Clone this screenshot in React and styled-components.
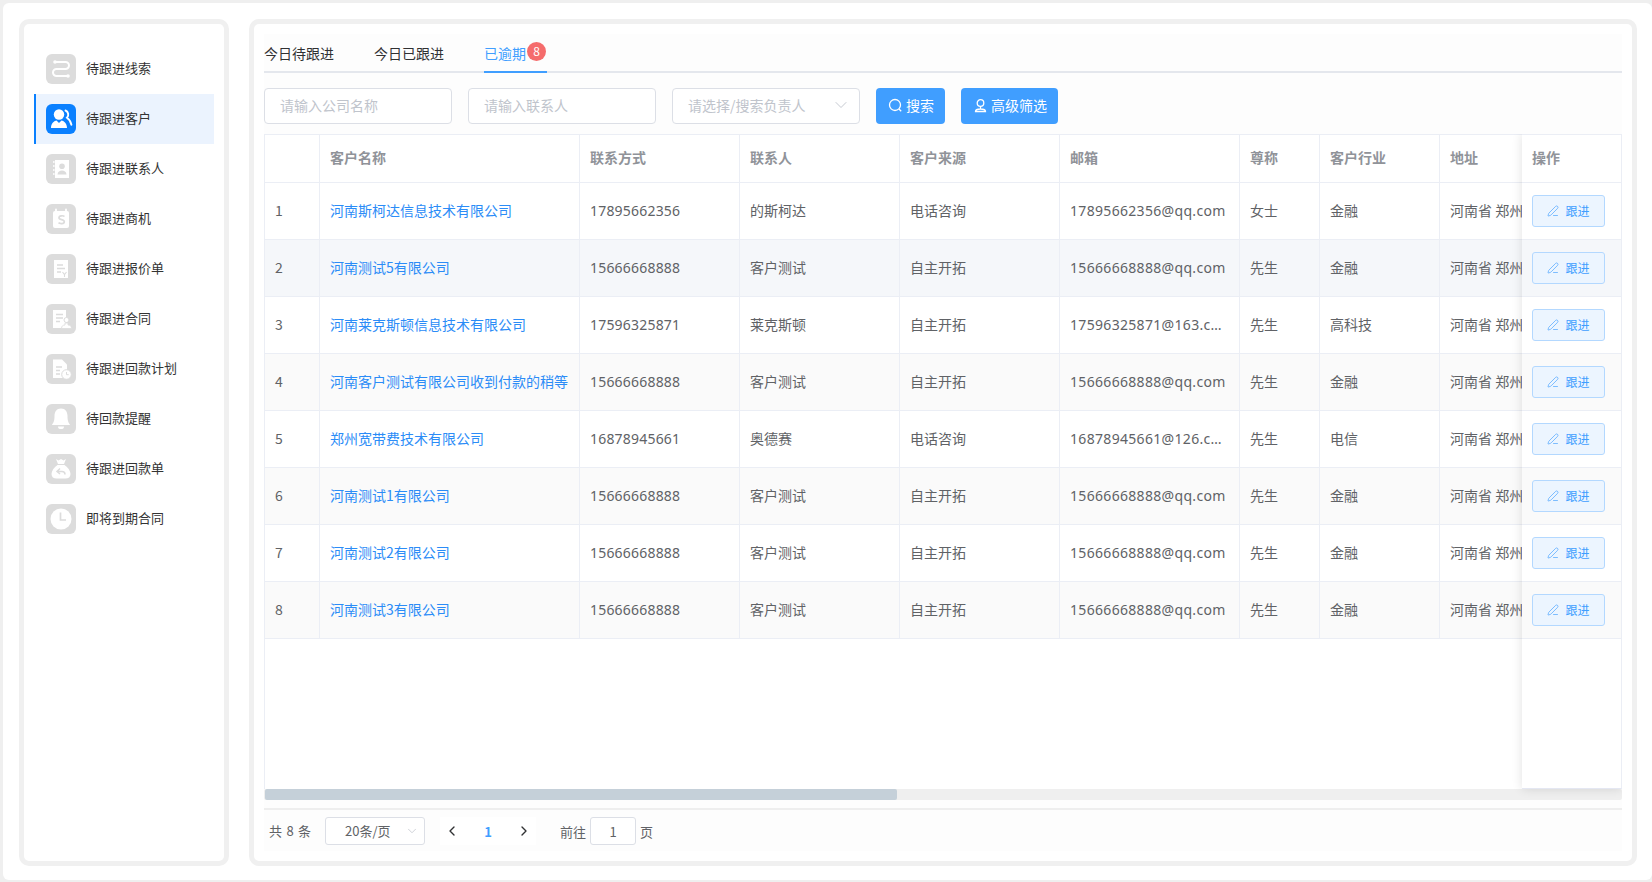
import React from "react";
import styled, { createGlobalStyle } from "styled-components";
import { ChevronDown, ChevronLeft, ChevronRight, PenLine } from "lucide-react";

const GlobalStyle = createGlobalStyle`
  html, body {
    margin: 0;
    padding: 0;
    height: 100%;
    background: #efefef;
  }
  body {
    font-family: "Noto Sans CJK SC", "Noto Sans", sans-serif;
    font-size: 14px;
    color: #606266;
  }
  * { box-sizing: border-box; }
`;

const Page = styled.div`
  width: 1652px;
  height: 882px;
  padding: 3px 0 0 3px;
  overflow: hidden;
`;

const Main = styled.div`
  height: 877px;
  background: #fff;
  border-radius: 6px;
  padding: 16px 15px 0 16px;
  display: flex;
  gap: 20px;
  align-items: flex-start;
`;

const Card = styled.div`
  height: 847px;
  border: 5px solid #f0f0f0;
  border-radius: 10px;
  background: #fff;
  min-width: 0;
`;

const SideCard = styled(Card)`
  flex: 0 0 210px;
  padding: 20px 10px;
`;

const ContentCard = styled(Card)`
  flex: 0 0 1388px;
  padding: 10px;
`;

const Inner = styled.div`
  height: 100%;
  background: #fdfdfd;
  display: flex;
  flex-direction: column;
`;

const MenuItem = styled.div`
  height: 50px;
  display: flex;
  align-items: center;
  gap: 10px;
  padding-left: 10px;
  border-left: 2px solid ${(p) => (p.$active ? "#0a80ff" : "transparent")};
  background: ${(p) => (p.$active ? "#ebf3fe" : "transparent")};
  font-size: 13px;
  color: #333;
`;

const MenuLabel = styled.span`
  padding-bottom: 3px;
`;

const MenuIcon = styled.span`
  width: 30px;
  height: 30px;
  border-radius: 6px;
  background: ${(p) => (p.$active ? "#0a80ff" : "#dcdcdc")};
  display: flex;
  align-items: center;
  justify-content: center;
  svg { display: block; }
`;

const Tabs = styled.div`
  height: 39px;
  display: flex;
  border-bottom: 2px solid #e4e7ed;
`;

const Tab = styled.div`
  position: relative;
  padding: 0 20px;
  height: 39px;
  line-height: 39px;
  color: ${(p) => (p.$active ? "#409eff" : "#303133")};
  border-bottom: 2px solid ${(p) => (p.$active ? "#409eff" : "transparent")};
  &:first-child { padding-left: 0; }
  ${(p) => p.$active && "padding: 0 21px 0 0; margin-left: 20px;"}
`;

const Badge = styled.span`
  position: absolute;
  top: 8px;
  right: 1px;
  width: 19px;
  height: 19px;
  border-radius: 50%;
  background: #f56c6c;
  color: #fff;
  font-size: 12px;
  line-height: 18px;
  text-align: center;
`;

const Filters = styled.div`
  display: flex;
  gap: 16px;
  padding-top: 15px;
  height: 61px;
`;

const Field = styled.div`
  width: 188px;
  height: 36px;
  border: 1px solid #dcdfe6;
  border-radius: 4px;
  background: #fff;
  padding: 0 8px 2px 15px;
  display: flex;
  align-items: center;
  justify-content: space-between;
  color: #c0c4cc;
  font-size: 14px;
`;

const PrimaryButton = styled.div`
  height: 36px;
  padding: 0 11px 2px 12px;
  background: #409eff;
  border-radius: 4px;
  color: #fff;
  display: flex;
  align-items: center;
  gap: 3px;
  font-size: 14px;
`;

const TableBox = styled.div`
  position: relative;
  height: 666px;
  overflow: hidden;
  flex: none;
`;

const TableScroll = styled.div`
  height: 655px;
  overflow: hidden;
  border-left: 1px solid #ebeef5;
  border-top: 1px solid #ebeef5;
  background: #fff;
`;

const Table = styled.table`
  table-layout: fixed;
  border-collapse: separate;
  border-spacing: 0;
  width: 1258px;
`;

const HeadCell = styled.th`
  height: 48px;
  padding: 0 10px 3px;
  text-align: left;
  font-weight: 700;
  font-size: 14px;
  color: #909399;
  background: #fff;
  border-right: 1px solid #ebeef5;
  border-bottom: 1px solid #ebeef5;
  &:last-child { border-right: none; }
`;

const Row = styled.tr`
  background: ${(p) => (p.$hover ? "#f5f7fa" : p.$striped ? "#fafafa" : "#fff")};
`;

const Cell = styled.td`
  height: 57px;
  padding: 0 ${(p) => (p.$clip ? "0" : "10px")} 2px 10px;
  font-size: 14px;
  color: #606266;
  white-space: nowrap;
  overflow: hidden;
  text-overflow: ${(p) => (p.$clip ? "clip" : "ellipsis")};
  font-family: ${(p) => (p.$spacing ? '"Noto Sans", sans-serif' : "inherit")};
  letter-spacing: ${(p) => p.$spacing || "normal"};
  border-right: 1px solid #ebeef5;
  border-bottom: 1px solid #ebeef5;
  &:last-child { border-right: none; }
`;

const CompanyLink = styled.span`
  color: #2b8cf7;
`;

const FixedColumn = styled.div`
  position: absolute;
  top: 0;
  right: 0;
  width: 100px;
  height: 655px;
  background: #fff;
  border-top: 1px solid #ebeef5;
  border-right: 1px solid #ebeef5;
  border-bottom: 1px solid #e4e7f2;
  box-shadow: 0 0 10px rgba(0, 0, 0, 0.12);
`;

const FixedHead = styled.div`
  height: 48px;
  padding: 0 0 3px 10px;
  display: flex;
  align-items: center;
  font-weight: 700;
  color: #909399;
  border-bottom: 1px solid #ebeef5;
`;

const FixedRow = styled.div`
  height: 57px;
  padding-left: 10px;
  display: flex;
  align-items: center;
  background: ${(p) => (p.$hover ? "#f5f7fa" : p.$striped ? "#fafafa" : "#fff")};
  border-bottom: 1px solid #ebeef5;
`;

const FollowButton = styled.div`
  width: 73px;
  height: 32px;
  padding-bottom: 1px;
  background: #ecf5ff;
  border: 1px solid #b3d8ff;
  border-radius: 3px;
  color: #409eff;
  font-size: 12px;
  display: flex;
  align-items: center;
  justify-content: center;
  gap: 6px;
`;

const Scrollbar = styled.div`
  height: 11px;
  background: #efefef;
  padding-left: 1px;
  border-radius: 2px;
`;

const Thumb = styled.div`
  width: 632px;
  height: 11px;
  background: #c5d0d9;
  border-radius: 2px;
`;

const Pager = styled.div`
  flex: 1;
  margin-top: 8px;
  border-top: 2px solid #eeeeee;
  display: flex;
  align-items: center;
  padding: 1px 0 0 5px;
  font-size: 13px;
  color: #606266;
`;

const PagerTotal = styled.span`
  width: 56px;
  word-spacing: 1.5px;
  padding-bottom: 1px;
`;

const SizeSelect = styled.div`
  width: 100px;
  height: 28px;
  border: 1px solid #dcdfe6;
  border-radius: 3px;
  background: #fff;
  display: flex;
  align-items: center;
  justify-content: space-between;
  padding: 0 5px 1px 19px;
`;

const PagerNav = styled.div`
  width: 96px;
  height: 28px;
  margin: 0 24px 0 15px;
  background: #fff;
  display: flex;
  align-items: center;
  justify-content: space-between;
  padding: 0 4px;
  color: #303133;
`;

const PageNumber = styled.span`
  color: #409eff;
  font-weight: 700;
`;

const JumpInput = styled.div`
  width: 46px;
  height: 28px;
  margin: 0 4px;
  border: 1px solid #dcdfe6;
  border-radius: 3px;
  background: #fff;
  display: flex;
  align-items: center;
  justify-content: center;
`;

const g = "#fff";
const c = "#dcdcdc";

const icons = [
  // 线索
  <>
    <circle cx="9" cy="8" r="1.8" fill={g} />
    <circle cx="22" cy="22" r="1.8" fill={g} />
    <path d="M9 8H19.500a3.500 3.500 0 0 1 0 7h-9a3.500 3.500 0 0 0 0 7H22" fill="none" stroke={g} strokeWidth="2" />
  </>,
  // 客户
  <>
    <circle cx="13" cy="10.500" r="5.200" fill={g} />
    <path d="M5 24c0-5 3.500-7.300 5.500-7.600l2.500 2.600 2.500-2.600c2 .3 5.500 2.600 5.500 7.600z" fill={g} />
    <path d="M19.500 6.500c3 1.200 3.600 5 1.500 7.200 2.400 1.600 3.800 4 4.400 7" fill="none" stroke={g} strokeWidth="1.900" strokeLinecap="round" />
  </>,
  // 联系人
  <>
    <path d="M9 6h14v18H9z" fill={g} />
    <path d="M7 8h3M7 12h3M7 16h3M7 20h3" stroke={g} strokeWidth="1.600" strokeDasharray="1.600 0.800" />
    <circle cx="16" cy="12.300" r="2.800" fill={c} />
    <path d="M11.500 20.500c.3-3 2.300-4 4.500-4s4.200 1 4.500 4z" fill={c} />
  </>,
  // 商机
  <>
    <rect x="7" y="7" width="16" height="17" rx="2" fill={g} />
    <path d="M10 5.500v3M20 5.500v3" stroke={g} strokeWidth="1.800" strokeLinecap="round" />
    <path d="M18.500 12.500c-1-1-5.500-1.300-5.500 1.200 0 2.600 5.300 1.300 5.300 4 0 2.400-4.600 2.200-5.800 1" fill="none" stroke={c} strokeWidth="1.700" />
  </>,
  // 报价单
  <>
    <path d="M8 6h14v18H8z" fill={g} />
    <path d="M11 11h6M11 14.500h8M11 18h4" stroke={c} strokeWidth="1.300" />
    <path d="M16.500 18l2 2.500 2-2.500M18.500 20.500V23" fill="none" stroke={c} strokeWidth="1.100" />
  </>,
  // 合同
  <>
    <path d="M7 6h13v18H7z" fill={g} />
    <path d="M10 10.500h7M10 14h7M10 17.500h4" stroke={c} strokeWidth="1.300" />
    <circle cx="20.500" cy="16" r="2.500" fill={g} stroke={c} strokeWidth="1" />
    <path d="M15.500 24.500c0-2.500 1.500-3.500 3.500-3.500v-2h3v2c2 0 3.500 1 3.500 3.500z" fill={g} stroke={c} strokeWidth="0.800" />
  </>,
  // 回款计划
  <>
    <path d="M7 5.500h9l5 5V24H7z" fill={g} />
    <path d="M10 13h6M10 16.500h4M10 20h4" stroke={c} strokeWidth="1.500" />
    <circle cx="20.500" cy="20.500" r="4.800" fill={g} stroke={c} strokeWidth="1" />
    <path d="M20.500 18v2.700h2.200" fill="none" stroke={c} strokeWidth="1" />
  </>,
  // 提醒
  <>
    <path d="M15 4.500c4.500 0 6.500 3.500 6.500 7.500 0 5 1 6.800 2.700 9H5.800c1.700-2.200 2.700-4 2.700-9 0-4 2-7.500 6.500-7.500z" fill={g} />
    <path d="M12 22.500h6a3 2.600 0 0 1-6 0z" fill={g} />
  </>,
  // 回款单
  <>
    <path d="M10 5l2.500 1.500L15 5l2.500 1.500L20 5l-2 5h-6z" fill={g} />
    <path d="M11.500 11h7c3.500 2.500 6 6 6 9 0 3-2 4.500-5 4.500h-9c-3 0-5-1.500-5-4.500 0-3 2.500-6.500 6-9z" fill={g} />
    <path d="M14 14.500l-3 3 3 2.500M11 17.500h5c2 0 3 1.500 3 3" fill="none" stroke={c} strokeWidth="1.500" />
  </>,
  // 到期
  <>
    <circle cx="15" cy="15" r="10.500" fill={g} />
    <path d="M14.500 8.500V16h5.500" fill="none" stroke={c} strokeWidth="1.700" />
  </>,
];

const menu = [
  "待跟进线索",
  "待跟进客户",
  "待跟进联系人",
  "待跟进商机",
  "待跟进报价单",
  "待跟进合同",
  "待跟进回款计划",
  "待回款提醒",
  "待跟进回款单",
  "即将到期合同",
];

const columns = [
  { title: "", width: 55 },
  { title: "客户名称", width: 260 },
  { title: "联系方式", width: 160 },
  { title: "联系人", width: 160 },
  { title: "客户来源", width: 160 },
  { title: "邮箱", width: 180 },
  { title: "尊称", width: 80 },
  { title: "客户行业", width: 120 },
  { title: "地址", width: 83 },
];

const rows = [
  ["河南斯柯达信息技术有限公司", "17895662356", "的斯柯达", "电话咨询", "17895662356@qq.com", "女士", "金融"],
  ["河南测试5有限公司", "15666668888", "客户测试", "自主开拓", "15666668888@qq.com", "先生", "金融"],
  ["河南莱克斯顿信息技术有限公司", "17596325871", "莱克斯顿", "自主开拓", "17596325871@163.com", "先生", "高科技"],
  ["河南客户测试有限公司收到付款的稍等", "15666668888", "客户测试", "自主开拓", "15666668888@qq.com", "先生", "金融"],
  ["郑州宽带费技术有限公司", "16878945661", "奥德赛", "电话咨询", "16878945661@126.com", "先生", "电信"],
  ["河南测试1有限公司", "15666668888", "客户测试", "自主开拓", "15666668888@qq.com", "先生", "金融"],
  ["河南测试2有限公司", "15666668888", "客户测试", "自主开拓", "15666668888@qq.com", "先生", "金融"],
  ["河南测试3有限公司", "15666668888", "客户测试", "自主开拓", "15666668888@qq.com", "先生", "金融"],
];

const isHover = (i) => i === 1;
const isStriped = (i) => i % 2 === 1;

const SearchGlyph = () => (
  <svg width="15" height="15" viewBox="0 0 15 15" fill="none" stroke="#fff" strokeWidth="1.300">
    <circle cx="7" cy="7" r="5.500" />
    <path d="M11 11l2.200 2.200" />
  </svg>
);

const UserGlyph = () => (
  <svg width="15" height="15" viewBox="0 0 15 15" fill="none" stroke="#fff" strokeWidth="1.300">
    <circle cx="7.500" cy="5" r="3.300" />
    <path d="M7.500 8.300v2.700M2.500 13.500c0-1.700 1.500-2.500 5-2.500s5 .8 5 2.500z" />
  </svg>
);

const App = () => {
  return (
    <Page>
      <GlobalStyle />
      <Main>
        <SideCard>
          {menu.map((name, i) => (
            <MenuItem key={name} $active={i === 1}>
              <MenuIcon $active={i === 1}>
                <svg width="30" height="30" viewBox="0 0 30 30">
                  {icons[i]}
                </svg>
              </MenuIcon>
              <MenuLabel>{name}</MenuLabel>
            </MenuItem>
          ))}
        </SideCard>
        <ContentCard>
          <Inner>
            <Tabs>
              <Tab>今日待跟进</Tab>
              <Tab>今日已跟进</Tab>
              <Tab $active>
                已逾期
                <Badge>8</Badge>
              </Tab>
            </Tabs>
            <Filters>
              <Field>请输入公司名称</Field>
              <Field>请输入联系人</Field>
              <Field>
                请选择/搜索负责人
                <ChevronDown size={20} strokeWidth={1.100} color="#c0c4cc" />
              </Field>
              <PrimaryButton>
                <SearchGlyph />
                搜索
              </PrimaryButton>
              <PrimaryButton>
                <UserGlyph />
                高级筛选
              </PrimaryButton>
            </Filters>
            <TableBox>
              <TableScroll>
                <Table>
                  <colgroup>
                    {columns.map((col, i) => (
                      <col key={i} width={col.width} />
                    ))}
                  </colgroup>
                  <thead>
                    <tr>
                      {columns.map((col, i) => (
                        <HeadCell key={i}>{col.title}</HeadCell>
                      ))}
                    </tr>
                  </thead>
                  <tbody>
                    {rows.map((r, i) => (
                      <Row key={i} $hover={isHover(i)} $striped={isStriped(i)}>
                        <Cell>{i + 1}</Cell>
                        <Cell>
                          <CompanyLink>{r[0]}</CompanyLink>
                        </Cell>
                        <Cell $spacing="0.2px">{r[1]}</Cell>
                        <Cell>{r[2]}</Cell>
                        <Cell>{r[3]}</Cell>
                        <Cell $spacing="0.32px">{r[4]}</Cell>
                        <Cell>{r[5]}</Cell>
                        <Cell>{r[6]}</Cell>
                        <Cell $clip>河南省 郑州市 金水区</Cell>
                      </Row>
                    ))}
                  </tbody>
                </Table>
              </TableScroll>
              <Scrollbar>
                <Thumb />
              </Scrollbar>
              <FixedColumn>
                <FixedHead>操作</FixedHead>
                {rows.map((r, i) => (
                  <FixedRow key={i} $hover={isHover(i)} $striped={isStriped(i)}>
                    <FollowButton>
                      <PenLine size={12} strokeWidth={1.300} />
                      跟进
                    </FollowButton>
                  </FixedRow>
                ))}
              </FixedColumn>
            </TableBox>
            <Pager>
              <PagerTotal>共 8 条</PagerTotal>
              <SizeSelect>
                20条/页
                <ChevronDown size={14} strokeWidth={1.300} color="#c0c4cc" />
              </SizeSelect>
              <PagerNav>
                <ChevronLeft size={16} strokeWidth={2} />
                <PageNumber>1</PageNumber>
                <ChevronRight size={16} strokeWidth={2} />
              </PagerNav>
              前往
              <JumpInput>1</JumpInput>页
            </Pager>
          </Inner>
        </ContentCard>
      </Main>
    </Page>
  );
};

export default App;
